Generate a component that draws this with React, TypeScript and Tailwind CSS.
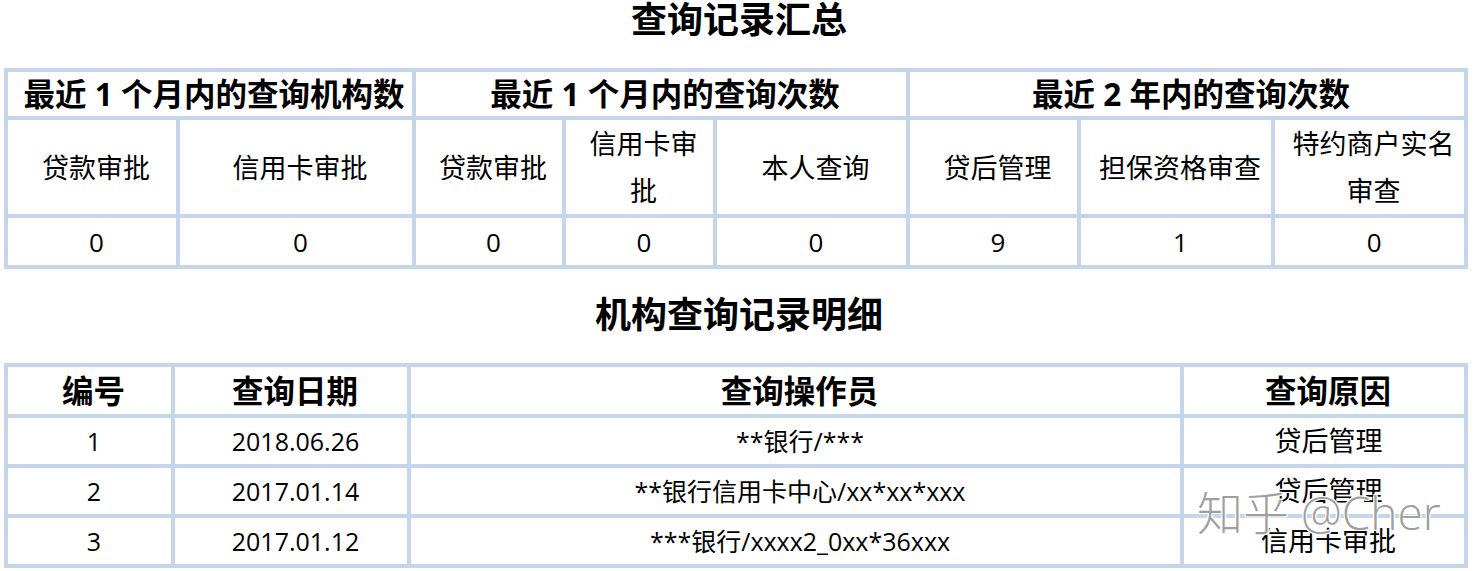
const border = "border-[4px] border-[#c6d6ea]";

const summaryCols = [172, 236, 150, 151, 193, 171, 194, 193];

const groups = [
  { label: "最近 1 个月内的查询机构数", span: 2 },
  { label: "最近 1 个月内的查询次数", span: 3 },
  { label: "最近 2 年内的查询次数", span: 3 },
];

const kinds = [
  "贷款审批",
  "信用卡审批",
  "贷款审批",
  "信用卡审批",
  "本人查询",
  "贷后管理",
  "担保资格审查",
  "特约商户实名审查",
];

const counts = ["0", "0", "0", "0", "0", "9", "1", "0"];

const detailCols = [167, 236, 773, 284];

const records = [
  { no: "1", date: "2018.06.26", who: "**银行/***", reason: "贷后管理" },
  { no: "2", date: "2017.01.14", who: "**银行信用卡中心/xx*xx*xxx", reason: "贷后管理" },
  { no: "3", date: "2017.01.12", who: "***银行/xxxx2_0xx*36xxx", reason: "信用卡审批" },
];

export default function App() {
  return (
    <div
      className="relative h-[571px] w-[1476px] overflow-hidden bg-white pl-[4px] text-black"
      style={{ fontFamily: '"Open Sans", "Noto Sans CJK SC", sans-serif' }}
    >
      <h1 className="mb-[28px] w-[1464px] pl-[6px] text-center text-[36px] font-bold leading-[40px]">
        查询记录汇总
      </h1>

      <table className={`w-[1464px] table-fixed border-collapse ${border}`}>
        <colgroup>
          {summaryCols.map((w, i) => (
            <col key={i} style={{ width: w }} />
          ))}
        </colgroup>
        <tbody>
          <tr className="h-[48px]">
            {groups.map((g) => (
              <td
                key={g.label}
                colSpan={g.span}
                className={`${border} py-0 pl-[8px] pr-0 text-center text-[31.5px] font-bold leading-[40px]`}
              >
                {g.label}
              </td>
            ))}
          </tr>
          <tr className="h-[97px]">
            {kinds.map((k, i) => (
              <td
                key={i}
                className={`${border} py-0 pl-[12px] pr-[4px] text-center text-[27px] leading-[47px]`}
              >
                {k}
              </td>
            ))}
          </tr>
          <tr className="h-[51px]">
            {counts.map((c, i) => (
              <td
                key={i}
                className={`${border} py-0 pl-[9px] pr-0 text-center text-[26px] leading-[40px]`}
              >
                {c}
              </td>
            ))}
          </tr>
        </tbody>
      </table>

      <h2 className="mb-[28px] mt-[26px] w-[1464px] pl-[6px] text-center text-[36px] font-bold leading-[40px]">
        机构查询记录明细
      </h2>

      <table className={`w-[1464px] table-fixed border-collapse ${border}`}>
        <colgroup>
          {detailCols.map((w, i) => (
            <col key={i} style={{ width: w }} />
          ))}
        </colgroup>
        <tbody>
          <tr className="h-[51px]">
            {["编号", "查询日期", "查询操作员", "查询原因"].map((h) => (
              <td
                key={h}
                className={`${border} py-0 pl-[8px] pr-0 text-center text-[31.5px] font-bold leading-[40px]`}
              >
                {h}
              </td>
            ))}
          </tr>
          {records.map((r) => (
            <tr key={r.no} className="h-[50px]">
              <td className={`${border} py-0 pl-[9px] pr-0 text-center text-[25px] leading-[40px]`}>
                {r.no}
              </td>
              <td className={`${border} py-0 pl-[9px] pr-0 text-center text-[25px] leading-[40px]`}>
                {r.date}
              </td>
              <td className={`${border} py-0 pl-[9px] pr-0 text-center text-[25px] leading-[40px]`}>
                {r.who}
              </td>
              <td className={`${border} py-0 pl-[9px] pr-0 text-center text-[27px] leading-[40px]`}>
                {r.reason}
              </td>
            </tr>
          ))}
        </tbody>
      </table>

      {/* watermark */}
      <div
        className="pointer-events-none absolute left-[1197px] top-[485px] whitespace-nowrap text-[46px] font-light leading-[54px] text-[#858585]/80"
        style={{
          textShadow:
            "1px 1px 0 #fff, -1px -1px 0 #fff, 1px -1px 0 #fff, -1px 1px 0 #fff",
        }}
      >
        知乎 @Cher
      </div>
    </div>
  );
}
